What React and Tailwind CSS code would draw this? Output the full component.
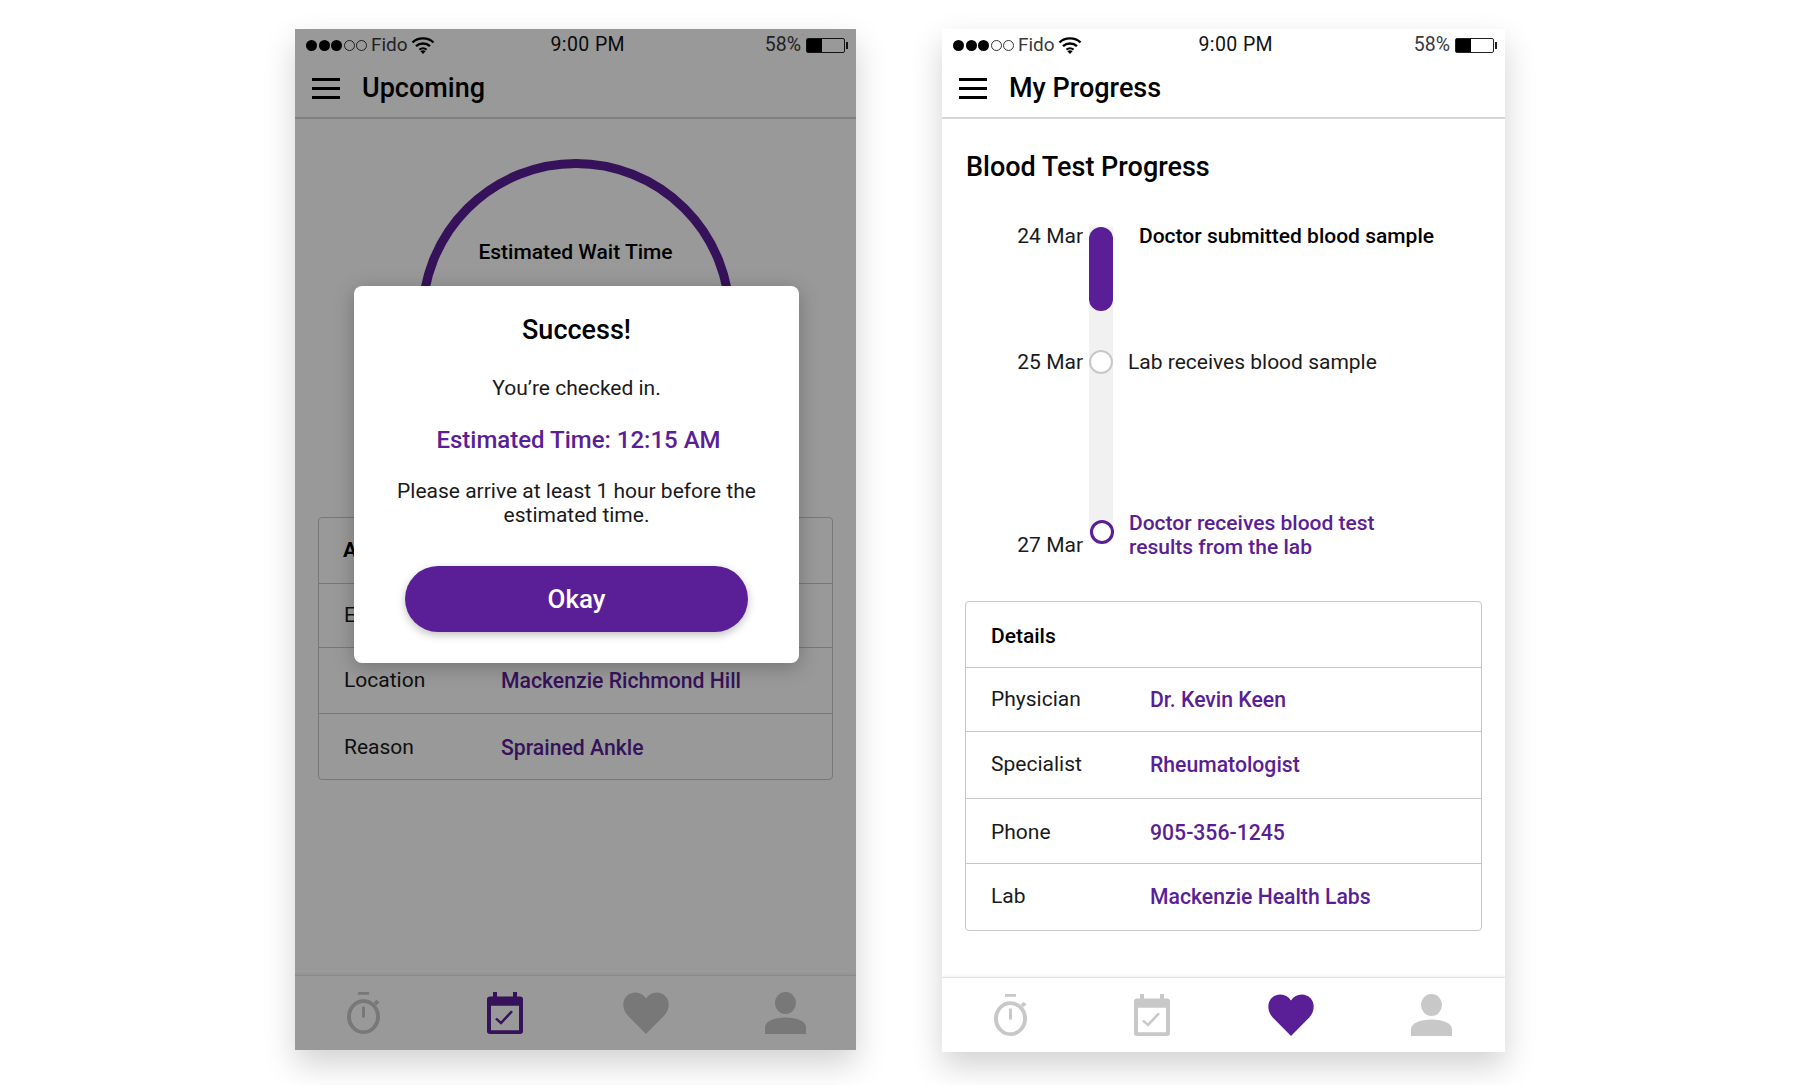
import React from "react";

const PURPLE = "#5a1e96";

function Wifi() {
  return (
    <svg width="24" height="18" viewBox="0 0 24 18" fill="none" stroke="currentColor" strokeWidth="2.4">
      <path d="M1.5 6.5C7 1 17 1 22.5 6.5" />
      <path d="M5 10.2C9 6.6 15 6.6 19 10.2" />
      <path d="M8.4 13.6C10.5 12 13.5 12 15.6 13.6" strokeWidth="2" />
      <path d="M12 18L9.4 15.2C11 14 13 14 14.6 15.2Z" fill="currentColor" stroke="none" />
    </svg>
  );
}

function StatusBar() {
  return (
    <div className="relative flex h-[30px] items-center px-[11px] pt-[2px] text-[19px] text-[#3a3a3a]">
      <div className="flex items-center gap-[1.5px]">
        <span className="h-[11px] w-[11px] rounded-full bg-black" />
        <span className="h-[11px] w-[11px] rounded-full bg-black" />
        <span className="h-[11px] w-[11px] rounded-full bg-black" />
        <span className="h-[11px] w-[11px] rounded-full border border-[#333]" />
        <span className="h-[11px] w-[11px] rounded-full border border-[#333]" />
      </div>
      <span className="ml-[4px]">Fido</span>
      <span className="ml-[3px] text-black"><Wifi /></span>
      <span className="flex-1 pr-[24px] text-center text-[19.5px] tracking-[0.4px] text-[#111]">9:00 PM</span>
      <span className="text-[19.5px]">58%</span>
      <span className="relative ml-[5px] h-[15px] w-[39px] overflow-visible rounded-[2px] border border-[#222]">
        <span className="block h-full w-[15px] bg-black" />
        <span className="absolute right-[-4px] top-[3px] h-[7px] w-[2px] bg-[#222]" />
      </span>
    </div>
  );
}

function Header({ title }) {
  return (
    <div className="flex h-[60px] items-center border-b-2 border-[#d6d6d6] pt-[1px] pl-[17px]">
      <div className="flex w-[28px] flex-col gap-[6px]">
        <span className="h-[3px] bg-black" />
        <span className="h-[3px] bg-black" />
        <span className="h-[3px] bg-black" />
      </div>
      <h1 className="ml-[22px] text-[27px] font-medium text-black">{title}</h1>
    </div>
  );
}

function Stopwatch({ color }) {
  return (
    <svg width="34" height="42" viewBox="0 0 34 46" preserveAspectRatio="none" fill="none">
      <rect x="11" y="0" width="11" height="3" fill={color} />
      <ellipse cx="16.5" cy="27" rx="14.5" ry="17" stroke={color} strokeWidth="4" />
      <rect x="15" y="16" width="3" height="12" fill={color} />
      <path d="M28 13l3-3" stroke={color} strokeWidth="4" />
    </svg>
  );
}
function Calendar({ color }) {
  return (
    <svg width="36" height="42" viewBox="0 0 36 46" preserveAspectRatio="none" fill="none">
      <path fillRule="evenodd" fill={color} d="M6 0h4v5h16V0h4v5h3a3 3 0 0 1 3 3v35a3 3 0 0 1-3 3H3a3 3 0 0 1-3-3V8a3 3 0 0 1 3-3h3zM4 15v27h28V15z" />
      <path d="M9 29l5 5 11-13" stroke={color} strokeWidth="2.6" />
    </svg>
  );
}
function Heart({ color }) {
  return (
    <svg width="46" height="42" viewBox="0 0 46 46" preserveAspectRatio="none">
      <path fill={color} d="M23 46L5 26C-2 18-1 6 7 2c6-3 12-1 16 5C27 1 33-1 39 2c8 4 9 16 2 24z" />
    </svg>
  );
}
function Person({ color }) {
  return (
    <svg width="41" height="42" viewBox="0 0 41 46" preserveAspectRatio="none">
      <ellipse cx="20.5" cy="12" rx="10.5" ry="12" fill={color} />
      <path fill={color} d="M0 46v-7c0-7 9-11 20.5-11S41 32 41 39v7z" />
    </svg>
  );
}

function BottomNav({ active, shift = "" }) {
  const gray = "#c8c8c8";
  const c = (k) => (active === k ? PURPLE : gray);
  return (
    <div className={`mt-auto grid h-[75px] grid-cols-4 items-start border-t border-[#e4e4e4] pt-[16px] shadow-[0_-1px_3px_rgba(0,0,0,0.06)] ${shift}`}>
      <div className="flex justify-center pr-[2px]"><Stopwatch color={c("timer")} /></div>
      <div className="flex justify-center"><Calendar color={c("cal")} /></div>
      <div className="flex justify-center"><Heart color={c("heart")} /></div>
      <div className="flex justify-center"><Person color={c("user")} /></div>
    </div>
  );
}

function Row({ label, value, h, labelW = "w-[159px]" }) {
  return (
    <div className={`flex items-center border-t border-[#c8c8c8] pl-[25px] text-[21px] text-[#1a1a1a] ${h}`}>
      <span className={labelW}>{label}</span>
      <span className="font-medium text-[21.2px] text-[#5a1e96]">{value}</span>
    </div>
  );
}

function LeftPhone() {
  return (
    <div className="relative flex h-[1021px] w-[561px] flex-col overflow-hidden bg-white shadow-[0_14px_30px_rgba(0,0,0,0.18)]">
      <StatusBar />
      <Header title="Upcoming" />
      <div className="flex flex-col items-center pt-[40px]">
        <div className="flex h-[316px] w-[316px] flex-col items-center rounded-full border-[9px] border-[#5a1e96] pt-[69px]">
          <span className="text-[21px] font-medium text-black">Estimated Wait Time</span>
        </div>
      </div>
      <div className="mx-[23px] mt-[42px] rounded-[4px] border border-[#c8c8c8]">
        <div className="flex h-[65px] items-center pl-[24px] text-[21px] font-bold text-black">Appointment Details</div>
        <Row label="Estimated Time" value="12:15 AM" h="h-[64px]" labelW="w-[157px]" />
        <Row label="Location" value="Mackenzie Richmond Hill" h="h-[66px]" labelW="w-[157px]" />
        <Row label="Reason" value="Sprained Ankle" h="h-[66px] pt-[2px]" labelW="w-[157px]" />
      </div>
      <BottomNav active="cal" />
      <div className="absolute inset-0 bg-black/40" />
      <div className="absolute left-[59px] top-[257px] flex h-[377px] w-[445px] flex-col items-center rounded-[8px] bg-white pt-[26px] shadow-[0_4px_20px_rgba(0,0,0,0.25)]">
        <h2 className="text-[27px] font-medium leading-[36px] text-black">Success!</h2>
        <p className="mt-[28px] text-[21px] leading-[24px] text-[#1a1a1a]">You’re checked in.</p>
        <p className="mt-[25px] pl-[4px] text-[24px] font-medium leading-[30px] text-[#5a1e96]">Estimated Time: 12:15 AM</p>
        <p className="mt-[24px] w-[380px] text-center text-[21px] leading-[24px] text-[#1a1a1a]">
          Please arrive at least 1 hour before the estimated time.
        </p>
        <button className="mt-[39px] h-[66px] w-[343px] rounded-full bg-[#5a1e96] text-[26px] font-medium text-white shadow-[0_3px_8px_rgba(0,0,0,0.25)]">
          Okay
        </button>
      </div>
    </div>
  );
}

function RightPhone() {
  return (
    <div className="flex h-[1023px] w-[563px] flex-col overflow-hidden bg-white shadow-[0_14px_30px_rgba(0,0,0,0.18)]">
      <StatusBar />
      <Header title="My Progress" />
      <h2 className="ml-[24px] mt-[31px] text-[27px] font-medium leading-[34px] text-black">Blood Test Progress</h2>
      <div className="ml-[24px] mt-[40px] flex h-[320px] text-[21px]">
        <div className="flex w-[117px] flex-col items-end text-[#1a1a1a]">
          <span className="leading-[24px]">24 Mar</span>
          <span className="mt-[102px] leading-[24px]">25 Mar</span>
          <span className="mt-[159px] leading-[24px]">27 Mar</span>
        </div>
        <div className="ml-[6px] mt-[3px] flex h-[317px] w-[24px] flex-col items-center rounded-b-full bg-[#f1f1f1]">
          <span className="h-[84px] w-full shrink-0 rounded-full bg-[#5a1e96]" />
          <span className="mt-[39px] h-[24px] w-[24px] shrink-0 rounded-full border-2 border-[#c8c8c8] bg-white" />
          <span className="ml-[2px] mt-[146px] h-[24px] w-[24px] shrink-0 rounded-full border-[3px] border-[#5a1e96] bg-white" />
        </div>
        <div className="flex flex-col">
          <span className="ml-[26px] font-medium leading-[24px] text-black">Doctor submitted blood sample</span>
          <span className="ml-[15px] mt-[102px] leading-[24px] text-[#1a1a1a]">Lab receives blood sample</span>
          <span className="ml-[16px] mt-[137px] w-[260px] font-medium leading-[24px] text-[#5a1e96]">
            Doctor receives blood test results from the lab
          </span>
        </div>
      </div>
      <div className="mx-[23px] mt-[57px] rounded-[4px] border border-[#c8c8c8]">
        <div className="flex h-[65px] items-center pl-[25px] pt-[4px] text-[21px] font-medium text-black">Details</div>
        <Row label="Physician" value="Dr. Kevin Keen" h="h-[64px]" />
        <Row label="Specialist" value="Rheumatologist" h="h-[67px]" />
        <Row label="Phone" value="905-356-1245" h="h-[65px] pt-[3px]" />
        <Row label="Lab" value="Mackenzie Health Labs" h="h-[67px]" />
      </div>
      <BottomNav active="heart" shift="pr-[4px]" />
    </div>
  );
}

export default function App() {
  return (
    <div className="flex min-h-[1085px] items-start gap-[86px] bg-white pl-[295px] pt-[29px] font-['Roboto',sans-serif]">
      <LeftPhone />
      <RightPhone />
    </div>
  );
}
